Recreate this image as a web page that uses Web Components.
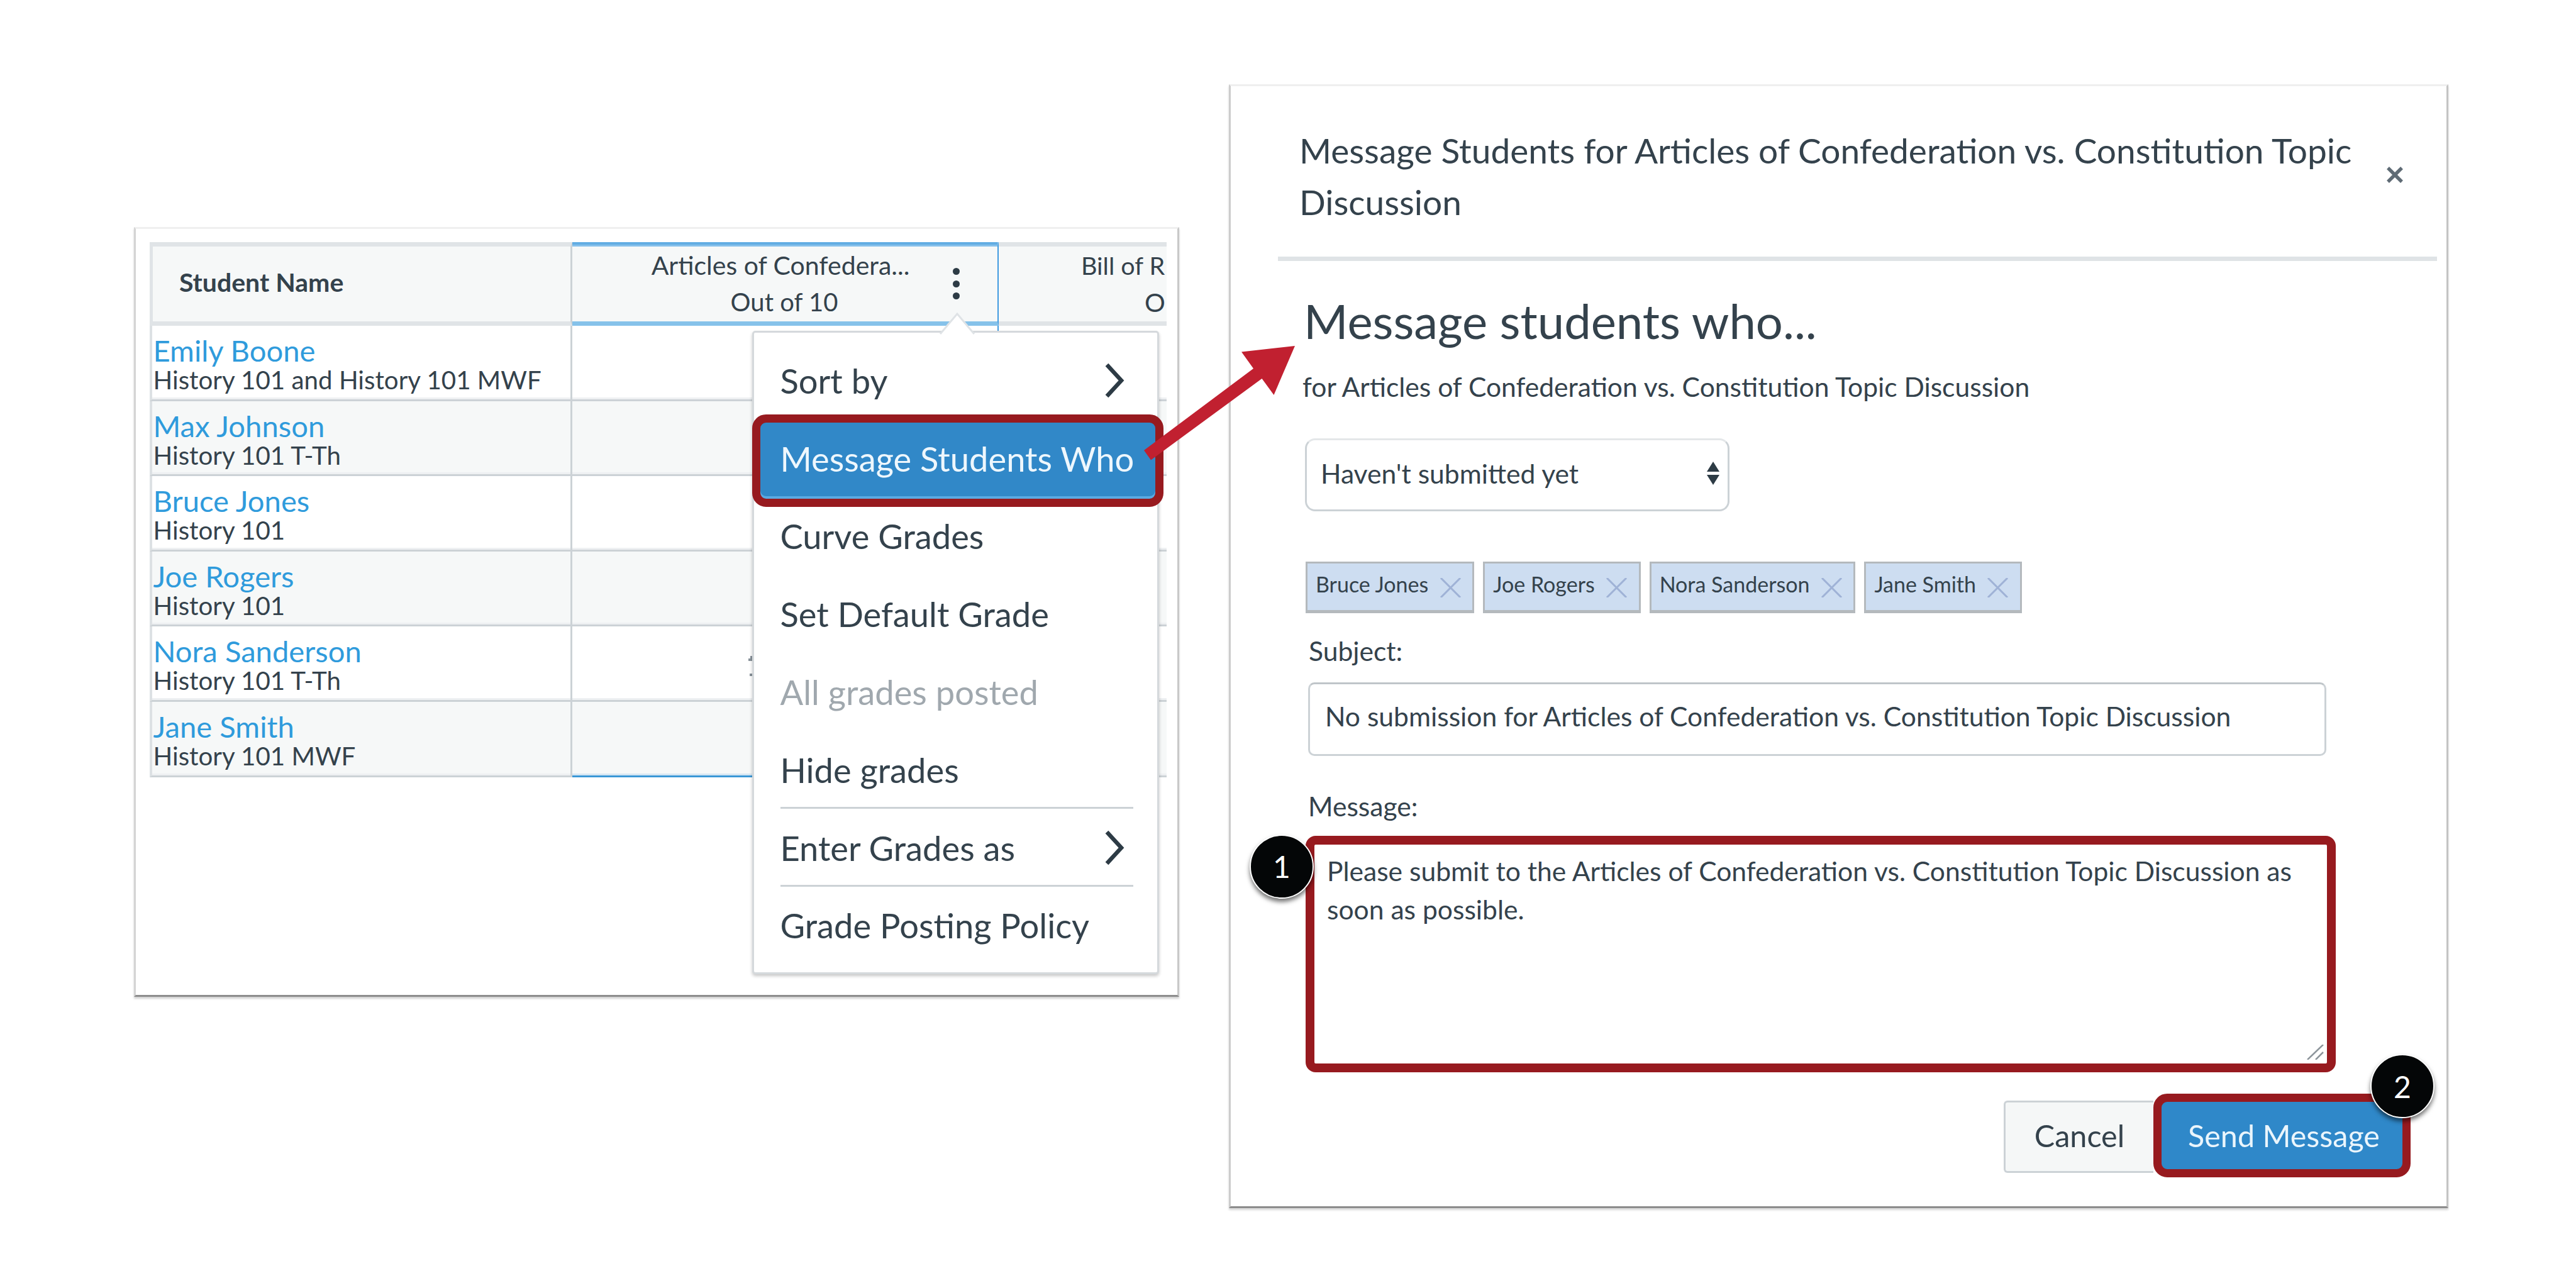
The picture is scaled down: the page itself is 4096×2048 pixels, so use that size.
<!DOCTYPE html>
<html lang="en">
<head>
<meta charset="utf-8">
<title>Message Students Who</title>
<style>
    html, body { margin: 0; background: #fff; }
    body { font-family: Lato, "Liberation Sans", sans-serif; color: #34424c; }
</style>
</head>
<body>
<page-stage>
    <gradebook-card>
        <gradebook-header></gradebook-header>
        <gradebook-row name="Emily Boone" section="History 101 and History 101 MWF"></gradebook-row>
        <gradebook-row alt name="Max Johnson" section="History 101 T-Th"></gradebook-row>
        <gradebook-row name="Bruce Jones" section="History 101"></gradebook-row>
        <gradebook-row alt name="Joe Rogers" section="History 101"></gradebook-row>
        <gradebook-row peek name="Nora Sanderson" section="History 101 T-Th"></gradebook-row>
        <gradebook-row alt last name="Jane Smith" section="History 101 MWF"></gradebook-row>
        <column-menu slot="menu">
            <menu-item sub>Sort by</menu-item>
            <menu-item active>Message Students Who</menu-item>
            <menu-item>Curve Grades</menu-item>
            <menu-item>Set Default Grade</menu-item>
            <menu-item disabled>All grades posted</menu-item>
            <menu-item>Hide grades</menu-item>
            <menu-item divided sub>Enter Grades as</menu-item>
            <menu-item divided>Grade Posting Policy</menu-item>
        </column-menu>
    </gradebook-card>
    <message-dialog>
        <student-chip>Bruce Jones</student-chip>
        <student-chip>Joe Rogers</student-chip>
        <student-chip>Nora Sanderson</student-chip>
        <student-chip>Jane Smith</student-chip>
    </message-dialog>
    <red-arrow></red-arrow>
</page-stage>

<script>
const define = (name, css, html) => {
    customElements.define(name, class extends HTMLElement {
        constructor() {
            super();
            this.attachShadow({ mode: 'open' });
        }
        connectedCallback() {
            const attr = n => this.getAttribute(n) || '';
            this.shadowRoot.innerHTML = `<style>${css}</style>${html(attr, this)}`;
        }
    });
};

const chevron = `<svg width="34" height="56" viewBox="0 0 34 56"><path d="M6 3 L29 28 L6 53" fill="none" stroke="#2d3b45" stroke-width="6.5"/></svg>`;

define('page-stage', `
    :host {
        display: flex;
        align-items: flex-start;
        position: relative;
        box-sizing: border-box;
        width: 4096px;
        height: 2048px;
        padding: 133.5px 0 0 213px;
        gap: 79px;
        overflow: hidden;
    }
`, () => `<slot></slot>`);

define('gradebook-card', `
    :host {
        display: block;
        position: relative;
        box-sizing: border-box;
        width: 1662px;
        height: 1224px;
        margin-top: 227px;
        padding: 21.5px 0 0 22px;
        background: #fff;
        border-style: solid;
        border-width: 3px;
        border-color: #efefef #c9c9c9 #8c8c8c #d4d4d4;
        box-shadow: 0 3px 3px rgba(0,0,0,.18);
    }
    .table {
        width: 1617px;
        overflow: hidden;
    }
`, () => `<div class="table"><slot></slot></div><slot name="menu"></slot>`);

define('gradebook-header', `
    :host {
        display: grid;
        grid-template-columns: 672px 678px 267px;
        height: 133px;
        font-size: 41px;
        line-height: 59.4px;
        background: #f6f8f8;
    }
    .cell {
        box-sizing: border-box;
        border-top: 7px solid #e0e4e7;
        border-bottom: 7px solid #e0e4e7;
        white-space: nowrap;
        overflow: hidden;
    }
    .name {
        display: flex;
        align-items: center;
        padding: 0 0 6px 42px;
        font-weight: 700;
        border-left: 5px solid #e0e4e7;
        border-right: 3px solid #ccd2d6;
    }
    .current {
        position: relative;
        text-align: center;
        padding-right: 14px;
        border-top-color: #86c0ea;
        border-bottom-color: #86c2ea;
        border-right: 2px solid #3f9ae0;
        overflow: visible;
    }
    .current::before {
        content: '';
        position: absolute;
        left: 0;
        right: 0;
        top: -7px;
        height: 3.5px;
        background: #62ade3;
    }
    .out {
        font-size: 40px;
        padding-left: 12px;
    }
    .kebab {
        position: absolute;
        left: 605px;
        top: 34px;
        display: flex;
        flex-direction: column;
        gap: 8.5px;
    }
    .kebab i {
        display: block;
        width: 11px;
        height: 11px;
        border-radius: 50%;
        background: #2d3b45;
    }
    .next div:first-child {
        padding-left: 131px;
        font-size: 39.5px;
    }
    .next div:last-child { padding-left: 232px; }
`, () => `
    <div class="cell name">Student Name</div>
    <div class="cell current">
        <div>Articles of Confedera...</div>
        <div class="out">Out of 10</div>
        <span class="kebab"><i></i><i></i><i></i></span>
    </div>
    <div class="cell next">
        <div>Bill of R</div>
        <div>O</div>
    </div>
`);

define('gradebook-row', `
    :host {
        display: grid;
        grid-template-columns: 672px 678px 267px;
        height: 119.6px;
        background: #fff;
    }
    :host([alt]) { background: #f6f8f8; }
    .cell {
        position: relative;
        box-sizing: border-box;
        border-bottom: 3px solid #ccd2d6;
        box-shadow: inset 0 -3px 0 #eef0f2;
    }
    .student {
        padding: 15px 0 0 1.5px;
        border-left: 4px solid #dde1e4;
        border-right: 3px solid #ccd2d6;
    }
    .link {
        color: #2f9bdc;
        font-size: 47.2px;
        line-height: 47px;
    }
    .section {
        font-size: 40.3px;
        line-height: 47px;
    }
    .grade { border-right: 2px solid #3f9ae0; }
    :host([last]) .grade {
        border-bottom-color: #3a97d6;
        box-shadow: inset 0 -3px 0 #d5e6f3;
    }
    svg {
        position: absolute;
        left: 280px;
        top: 47px;
    }
`, (attr, el) => `
    <div class="cell student">
        <div class="link">${attr('name')}</div>
        <div class="section">${attr('section')}</div>
    </div>
    <div class="cell grade">${el.hasAttribute('peek') ? '<svg width="8" height="32"><rect x="0" y="4" width="6" height="4" fill="#88929a"/><rect x="3" y="0" width="3" height="4" fill="#88929a"/><rect x="2" y="28" width="4" height="4" fill="#88929a"/></svg>' : ''}</div>
    <div class="cell"></div>
`);

define('column-menu', `
    :host {
        display: block;
        position: absolute;
        left: 979.5px;
        top: 162.5px;
        box-sizing: border-box;
        width: 647px;
        height: 1023px;
        padding-top: 14px;
        background: #fff;
        border: 3px solid #d5d9dc;
        border-radius: 5px;
        box-shadow: 0 3px 5px rgba(0,0,0,.22);
    }
    svg {
        position: absolute;
        left: 294px;
        top: -32px;
    }
`, () => `
    <svg width="58" height="36" viewBox="0 0 58 36">
        <path d="M2 34 L29 2 L56 34 Z" fill="#fff"/>
        <path d="M2 34 L29 2 L56 34" fill="none" stroke="#dfe3e6" stroke-width="3"/>
    </svg>
    <slot></slot>
`);

define('menu-item', `
    :host {
        display: flex;
        align-items: center;
        justify-content: space-between;
        position: relative;
        box-sizing: border-box;
        height: 123.8px;
        padding: 0 52px 0 42px;
        font-size: 54.3px;
        white-space: nowrap;
    }
    :host([disabled]) { color: #a0a8ae; }
    :host([active]) { color: #eef7fd; }
    :host([active])::before {
        content: '';
        position: absolute;
        left: -3px;
        right: -10px;
        top: -8px;
        bottom: -15px;
        box-sizing: border-box;
        background: #3188c8;
        border: 13px solid #971a1f;
        border-radius: 22px;
        box-shadow: inset 0 -4px 0 #5aaae3;
    }
    span { position: relative; }
    .rule {
        position: absolute;
        left: 42px;
        width: 561px;
        top: -3px;
        height: 3px;
        background: #ccd2d6;
    }
`, (attr, el) => `
    ${el.hasAttribute('divided') ? '<div class="rule"></div>' : ''}
    <span><slot></slot></span>
    ${el.hasAttribute('sub') ? chevron : ''}
`);

define('message-dialog', `
    :host {
        display: block;
        position: relative;
        box-sizing: border-box;
        width: 1939px;
        height: 1787px;
        background: #fff;
        border-style: solid;
        border-width: 3px;
        border-color: #efefef #c4c4c4 #8c8c8c #cccccc;
        box-shadow: 0 3px 3px rgba(0,0,0,.16);
    }
    header {
        display: flex;
        align-items: center;
        margin: 0 15px 0 75px;
        padding: 61px 52px 46.4px 34px;
        border-bottom: 7px solid #dfe3e6;
    }
    .title {
        flex: 1;
        font-size: 55px;
        line-height: 82px;
        padding-right: 20px;
    }
    .close { margin-top: -3px; }
    .body {
        display: flex;
        flex-direction: column;
        align-items: flex-start;
        padding: 50px 57px 0 114px;
        font-size: 42.6px;
    }
    h1 {
        margin: 0 0 0 2px;
        font-size: 76px;
        font-weight: 400;
        line-height: 90px;
    }
    .lede {
        margin-top: 35.3px;
        line-height: 50px;
    }
    .select {
        display: flex;
        align-items: center;
        justify-content: space-between;
        box-sizing: border-box;
        width: 675px;
        height: 116px;
        margin: 57px 0 0 4px;
        padding: 0 13px 6px 22px;
        border: 3px solid #ccd2d6;
        border-top-color: #e4e7e9;
        border-radius: 16px;
    }
    .chips {
        display: flex;
        gap: 14px;
        margin: 80px 0 0 5px;
    }
    label {
        display: block;
        margin-left: 10px;
        line-height: 50px;
    }
    .subject-label { margin-top: 35.6px; }
    .message-label { margin-top: 55px; margin-left: 9px; }
    .input {
        display: flex;
        align-items: center;
        box-sizing: border-box;
        width: 1619px;
        height: 116.5px;
        margin: 25px 0 0 9px;
        padding: 0 0 10px 24px;
        border: 3px solid #ccd2d6;
        border-top-color: #bfc5c9;
        border-radius: 10px;
        white-space: nowrap;
    }
    .textarea {
        position: relative;
        box-sizing: border-box;
        width: 1637.5px;
        height: 375.5px;
        margin: 22.5px 0 0 5px;
        padding: 10.5px 20px 0 20px;
        border: 14px solid #971a1f;
        border-radius: 16px;
        line-height: 61px;
    }
    .grip {
        position: absolute;
        right: 5px;
        bottom: 6px;
    }
    footer {
        display: flex;
        justify-content: flex-end;
        align-items: flex-start;
        align-self: stretch;
        margin-top: 34px;
        font-size: 48.5px;
    }
    .btn {
        display: flex;
        align-items: center;
        justify-content: center;
        box-sizing: border-box;
    }
    .cancel {
        width: 238px;
        height: 115px;
        margin-top: 11px;
        padding-bottom: 4px;
        background: #f5f7f7;
        border: 3px solid #ccd2d6;
        border-right: 0;
        border-radius: 6px 0 0 6px;
    }
    .send {
        width: 409px;
        height: 133px;
        padding-left: 6px;
        background: #2f88c9;
        color: #eaf5fc;
        border: 13px solid #971a1f;
        border-radius: 22px;
    }
`, () => `
    <header>
        <div class="title">Message Students for Articles of Confederation vs. Constitution Topic Discussion</div>
        <svg class="close" width="30" height="30" viewBox="0 0 30 30"><path d="M4 4 L26 26 M26 4 L4 26" stroke="#5f6b75" stroke-width="5.5"/></svg>
    </header>
    <div class="body">
        <h1>Message students who...</h1>
        <div class="lede">for Articles of Confederation vs. Constitution Topic Discussion</div>
        <div class="select">
            <span>Haven't submitted yet</span>
            <svg width="20" height="37" viewBox="0 0 20 37"><path d="M10 0 L20 16 L0 16 Z M0 21 L20 21 L10 37 Z" fill="#2d3b45"/></svg>
        </div>
        <div class="chips"><slot></slot></div>
        <label class="subject-label">Subject:</label>
        <div class="input">No submission for Articles of Confederation vs. Constitution Topic Discussion</div>
        <label class="message-label">Message:</label>
        <div class="textarea">
            Please submit to the Articles of Confederation vs. Constitution Topic Discussion as soon as possible.
            <svg class="grip" width="28" height="24" viewBox="0 0 28 24"><path d="M27 0 L2 24 M27 12 L15 24" stroke="#8d959b" stroke-width="2.5"/></svg>
        </div>
        <footer>
            <div class="btn cancel">Cancel</div>
            <div class="btn send">Send Message</div>
        </footer>
    </div>
    <callout-badge style="left:30px;top:1190px">1</callout-badge>
    <callout-badge style="left:1812px;top:1539.5px">2</callout-badge>
`);

define('student-chip', `
    :host {
        display: flex;
        align-items: center;
        box-sizing: border-box;
        height: 81.5px;
        padding: 0 17.5px 8px 13px;
        gap: 17.5px;
        background: #cdddf1;
        border: 3px solid #b4b9bd;
        border-bottom-width: 5px;
        font-size: 34px;
        white-space: nowrap;
    }
    svg { margin-top: 11px; }
`, () => `<slot></slot><svg width="35" height="31" viewBox="0 0 35 31"><path d="M2 0 L33 31 M33 0 L2 31" stroke="#9fb2d6" stroke-width="3"/></svg>`);

define('callout-badge', `
    :host {
        display: flex;
        align-items: center;
        justify-content: center;
        position: absolute;
        box-sizing: border-box;
        width: 102px;
        height: 102px;
        background: #040607;
        color: #fff;
        border: 2px solid #fff;
        border-radius: 50%;
        box-shadow: 0 5px 7px rgba(0,0,0,.55);
        font-size: 48px;
    }
`, () => `<slot></slot>`);

define('red-arrow', `
    :host {
        position: absolute;
        left: 0;
        top: 0;
    }
    svg { display: block; }
`, () => `<svg width="4096" height="2048"><polygon points="1819,716 1993,586 1974,559.5 2059,550 2025.5,628 2006.5,602 1830,731.5" fill="#c12030"/></svg>`);
</script>
</body>
</html>
